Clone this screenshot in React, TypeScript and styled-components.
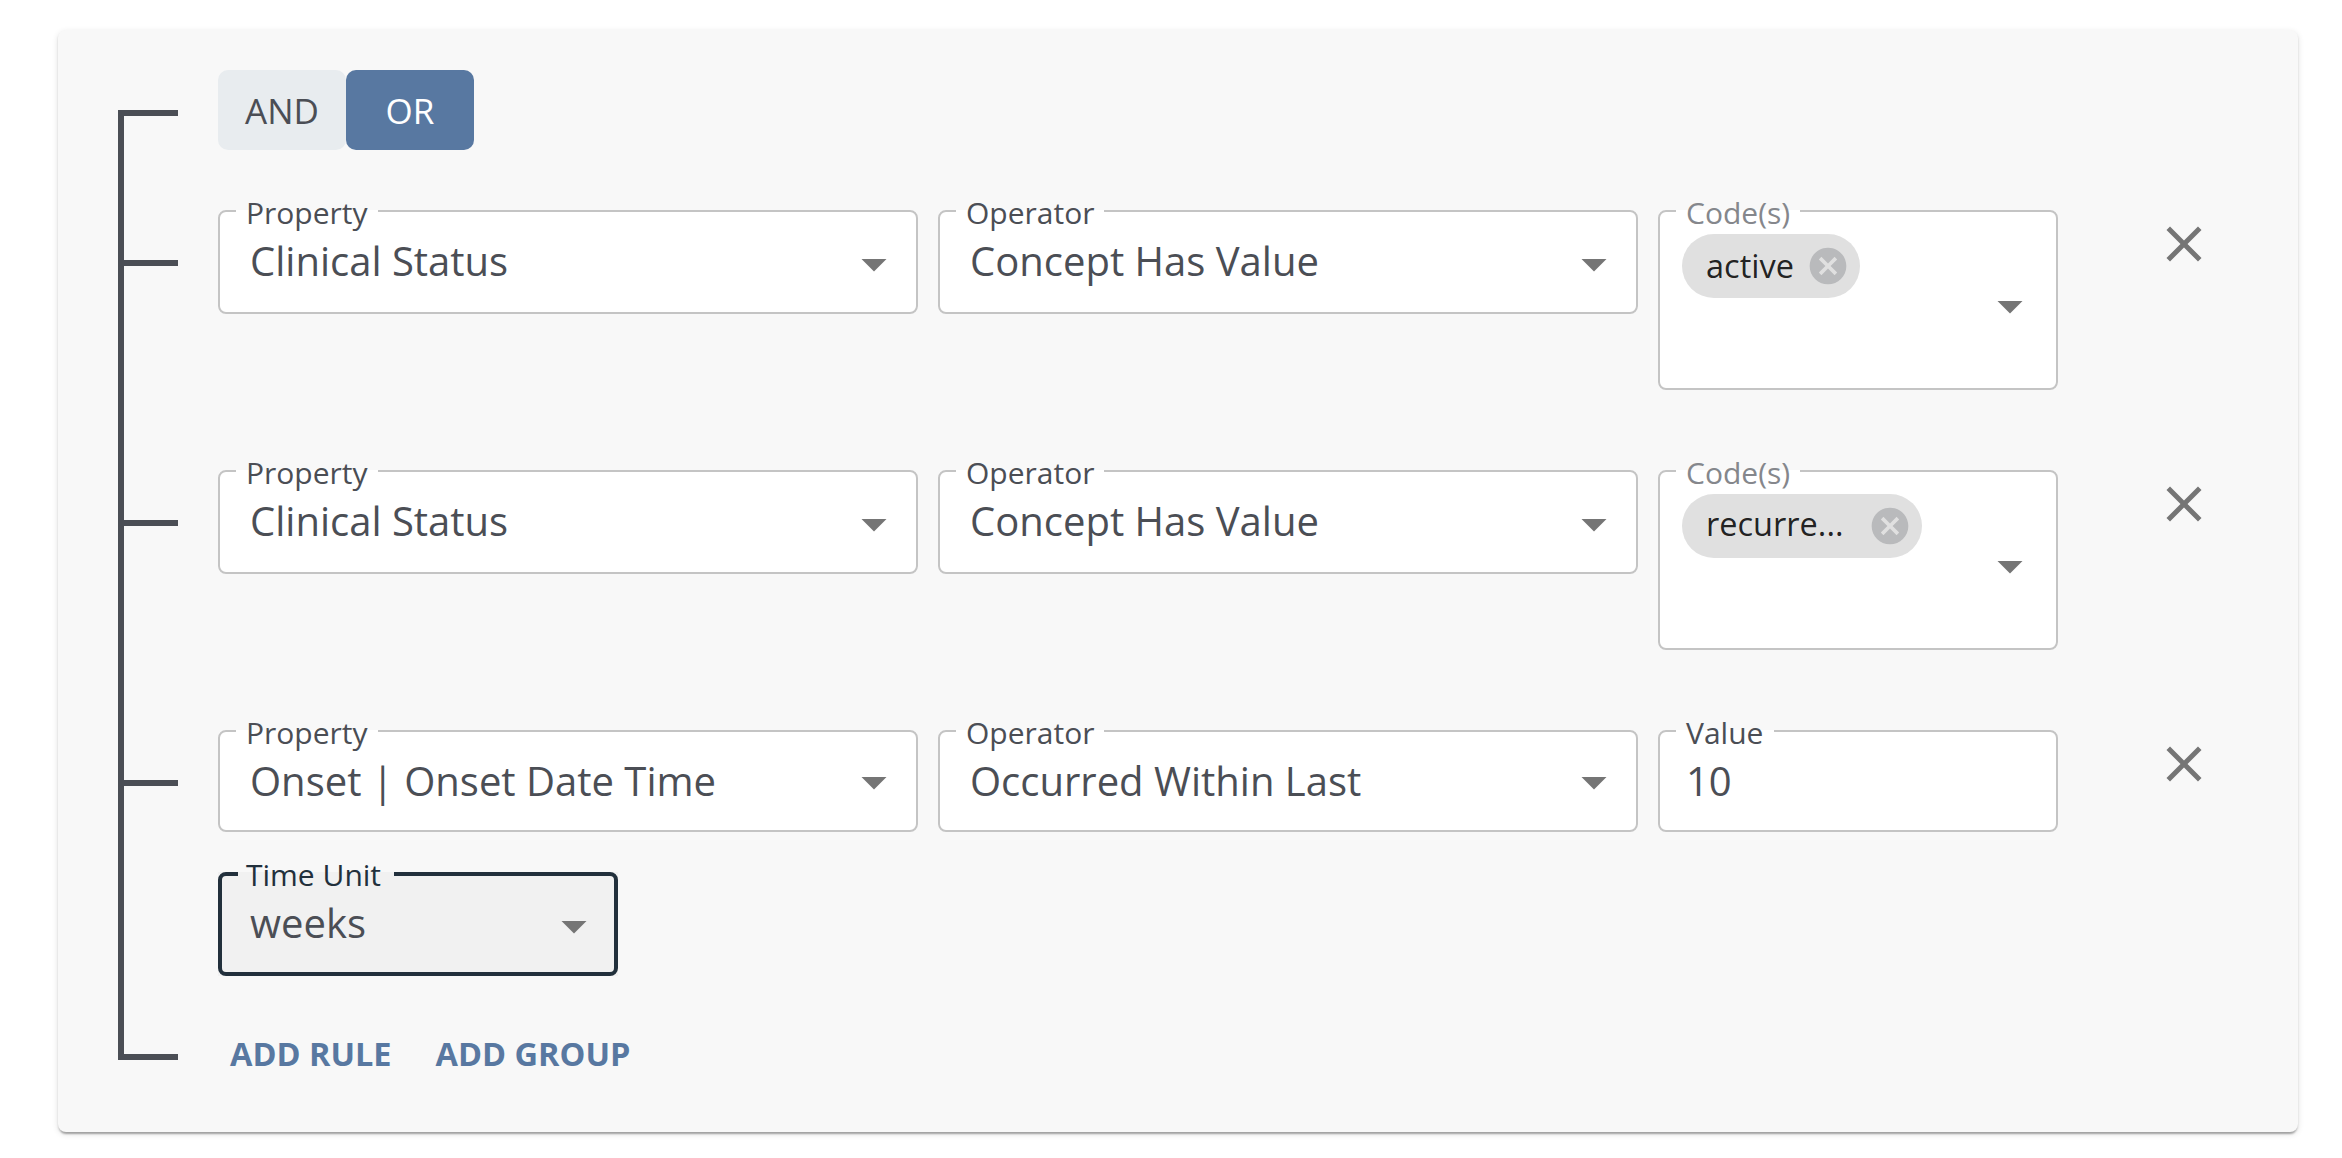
import React from "react";
import styled, { createGlobalStyle } from "styled-components";

const ink = "#4b4e55";
const accent = "#5878a1";
const focus = "#22303c";

const GlobalStyle = createGlobalStyle`
  *, *::before, *::after { box-sizing: border-box; }
  body {
    margin: 0;
    background: #fff;
    color: ${ink};
    font-family: "Open Sans", "Noto Sans", sans-serif;
  }
  button { font-family: inherit; border: 0; padding: 0; background: none; cursor: pointer; }
`;

const Page = styled.main`
  display: flex;
  height: 1158px;
  padding: 30px 44px 26px 58px;
  overflow: hidden;
`;

const Card = styled.section`
  flex: 1;
  display: flex;
  flex-direction: column;
  padding: 40px 84px 0 60px;
  background: #f8f8f8;
  border-radius: 8px;
  box-shadow:
    0 4px 2px -2px rgba(0, 0, 0, 0.2),
    0 2px 2px 0 rgba(0, 0, 0, 0.14),
    0 2px 6px 0 rgba(0, 0, 0, 0.12);
`;

const Row = styled.div<{ $height: number }>`
  display: flex;
  align-items: flex-start;
  height: ${(p) => p.$height}px;
`;

const Rail = styled.div<{ $part: "start" | "middle" | "end" }>`
  flex: none;
  width: 60px;
  margin-right: 40px;
  border-left: 6px solid ${ink};
  ${(p) =>
    p.$part === "start" &&
    `margin-top: 40px; height: calc(100% - 40px); border-top: 6px solid ${ink}; border-left: 0;
     &::before { content: ""; display: block; width: 6px; height: 100%; background: ${ink}; }`}
  ${(p) =>
    p.$part === "middle" &&
    `height: 100%; padding-top: 50px;
     &::before { content: ""; display: block; height: 6px; background: ${ink}; }`}
  ${(p) =>
    p.$part === "end" &&
    `height: 30px; padding-top: 24px;
     &::before { content: ""; display: block; height: 6px; background: ${ink}; }`}
`;

const Toggle = styled.button<{ $selected?: boolean }>`
  width: 128px;
  height: 80px;
  border-radius: 10px;
  font-size: 35px;
  line-height: 81px;
  text-align: center;
  color: ${(p) => (p.$selected ? "#fff" : ink)};
  background: ${(p) => (p.$selected ? accent : "#e8ecef")};
`;

const Fields = styled.div`
  flex: none;
  display: flex;
  flex-wrap: wrap;
  align-items: flex-start;
  gap: 40px 20px;
  width: 1840px;
`;

const FieldBox = styled.div<{ $width: number; $height: number; $focused?: boolean }>`
  position: relative;
  width: ${(p) => p.$width}px;
  height: ${(p) => p.$height}px;
  background: ${(p) => (p.$focused ? "#f1f1f1" : "#fff")};
  border-radius: ${(p) => (p.$focused ? 0 : 8)}px;
`;

const Outline = styled.div<{ $focused?: boolean; $inset: number }>`
  display: flex;
  align-items: flex-start;
  justify-content: space-between;
  height: 100%;
  padding-left: ${(p) => p.$inset - (p.$focused ? 4 : 2)}px;
  border: ${(p) => (p.$focused ? `4px solid ${focus}` : "2px solid #c4c4c4")};
  border-radius: 8px;
`;

const Notch = styled.div<{ $width: number; $focused?: boolean }>`
  position: absolute;
  top: 0;
  left: ${(p) => (p.$focused ? 20 : 18)}px;
  width: ${(p) => p.$width}px;
  height: ${(p) => (p.$focused ? 4 : 2)}px;
  background: ${(p) => (p.$focused ? "#f1f1f1" : "#fff")};
`;

const Label = styled.label<{ $tone: string }>`
  position: absolute;
  top: -18px;
  left: 28px;
  font-size: 30px;
  line-height: 41px;
  white-space: nowrap;
  color: ${(p) => p.$tone};
`;

const Value = styled.span<{ $focused?: boolean }>`
  margin-top: ${(p) => (p.$focused ? -2 : 0)}px;
  font-size: 40px;
  line-height: 97px;
  white-space: nowrap;
`;

const Caret = styled.svg<{ $top: number; $right: number }>`
  flex: none;
  width: 60px;
  height: 60px;
  margin: ${(p) => p.$top}px ${(p) => p.$right}px 0 auto;
  fill: #757575;
`;

const Chip = styled.span`
  display: flex;
  align-items: center;
  height: 64px;
  margin-top: 22px;
  padding: 0 10px 0 24px;
  border-radius: 32px;
  background: #e0e0e0;
`;

const ChipText = styled.span<{ $truncated?: boolean }>`
  width: ${(p) => (p.$truncated ? "150px" : "auto")};
  margin: ${(p) => (p.$truncated ? "0 12px 5px 0" : "0 12px 1px 0")};
  font-size: 32.5px;
  line-height: 45px;
  color: rgba(0, 0, 0, 0.87);
`;

const ChipDelete = styled.svg`
  width: 44px;
  height: 44px;
  fill: rgba(73, 76, 84, 0.26);
`;

const RemoveButton = styled.button`
  flex: none;
  width: 60px;
  height: 60px;
  margin: 4px 0 0 96px;
  svg { display: block; width: 60px; height: 60px; fill: #757575; }
`;

const Actions = styled.div`
  display: flex;
  gap: 20px;
  margin-top: 1px;
`;

const ActionButton = styled.button`
  padding: 0 12px;
  font-size: 32.5px;
  font-weight: 700;
  line-height: 45px;
  color: ${accent};
`;

type FieldProps = {
  label: string;
  value?: string;
  chip?: string;
  truncated?: boolean;
  width?: number;
  height?: number;
  notch: number;
  caret?: boolean;
  focused?: boolean;
};

function Field({ label, value, chip, truncated, width = 700, height = 104, notch, caret = true, focused }: FieldProps) {
  const border = focused ? 4 : 2;
  const inset = chip ? 24 : caret ? 32 : 28;
  const caretTop = (chip ? 66 : height === 102 ? 22 : 24) - border;
  const caretRight = (chip ? 18 : 14) - border;
  return (
    <FieldBox $width={width} $height={height} $focused={focused}>
      <Outline $focused={focused} $inset={inset}>
        {value && <Value $focused={focused}>{value}</Value>}
        {chip && (
          <Chip>
            <ChipText $truncated={truncated}>{chip}</ChipText>
            <ChipDelete viewBox="0 0 24 24">
              <path d="M12 2C6.47 2 2 6.47 2 12s4.47 10 10 10 10-4.47 10-10S17.53 2 12 2zm5 13.59L15.59 17 12 13.41 8.41 17 7 15.59 10.59 12 7 8.41 8.41 7 12 10.59 15.59 7 17 8.41 13.41 12 17 15.59z" />
            </ChipDelete>
          </Chip>
        )}
        {caret && (
          <Caret viewBox="0 0 24 24" $top={caretTop} $right={caretRight}>
            <path d="M7 10l5 5 5-5z" />
          </Caret>
        )}
      </Outline>
      <Notch $width={notch} $focused={focused} />
      <Label $tone={focused ? focus : chip ? "#85878c" : ink}>{label}</Label>
    </FieldBox>
  );
}

function Remove() {
  return (
    <RemoveButton aria-label="Remove rule">
      <svg viewBox="0 0 24 24">
        <path d="M19 6.41L17.59 5 12 10.59 6.41 5 5 6.41 10.59 12 5 17.59 6.41 19 12 13.41 17.59 19 19 17.59 13.41 12z" />
      </svg>
    </RemoveButton>
  );
}

const codeRules = [
  { chip: "active", truncated: false },
  { chip: "recurre...", truncated: true },
];

export default function App() {
  return (
    <>
      <GlobalStyle />
      <Page>
        <Card>
          <Row $height={140}>
            <Rail $part="start" />
            <Toggle>AND</Toggle>
            <Toggle $selected>OR</Toggle>
          </Row>
          {codeRules.map((rule) => (
            <Row $height={260} key={rule.chip}>
              <Rail $part="middle" />
              <Fields>
                <Field label="Property" value="Clinical Status" notch={142} />
                <Field label="Operator" value="Concept Has Value" notch={148} />
                <Field label="Code(s)" chip={rule.chip} truncated={rule.truncated} width={400} height={180} notch={124} />
              </Fields>
              <Remove />
            </Row>
          ))}
          <Row $height={300}>
            <Rail $part="middle" />
            <Fields>
              <Field label="Property" value="Onset | Onset Date Time" height={102} notch={142} />
              <Field label="Operator" value="Occurred Within Last" height={102} notch={148} />
              <Field label="Value" value="10" width={400} height={102} notch={98} caret={false} />
              <Field label="Time Unit" value="weeks" width={400} notch={156} focused />
            </Fields>
            <Remove />
          </Row>
          <Row $height={72}>
            <Rail $part="end" />
            <Actions>
              <ActionButton>ADD RULE</ActionButton>
              <ActionButton>ADD GROUP</ActionButton>
            </Actions>
          </Row>
        </Card>
      </Page>
    </>
  );
}
